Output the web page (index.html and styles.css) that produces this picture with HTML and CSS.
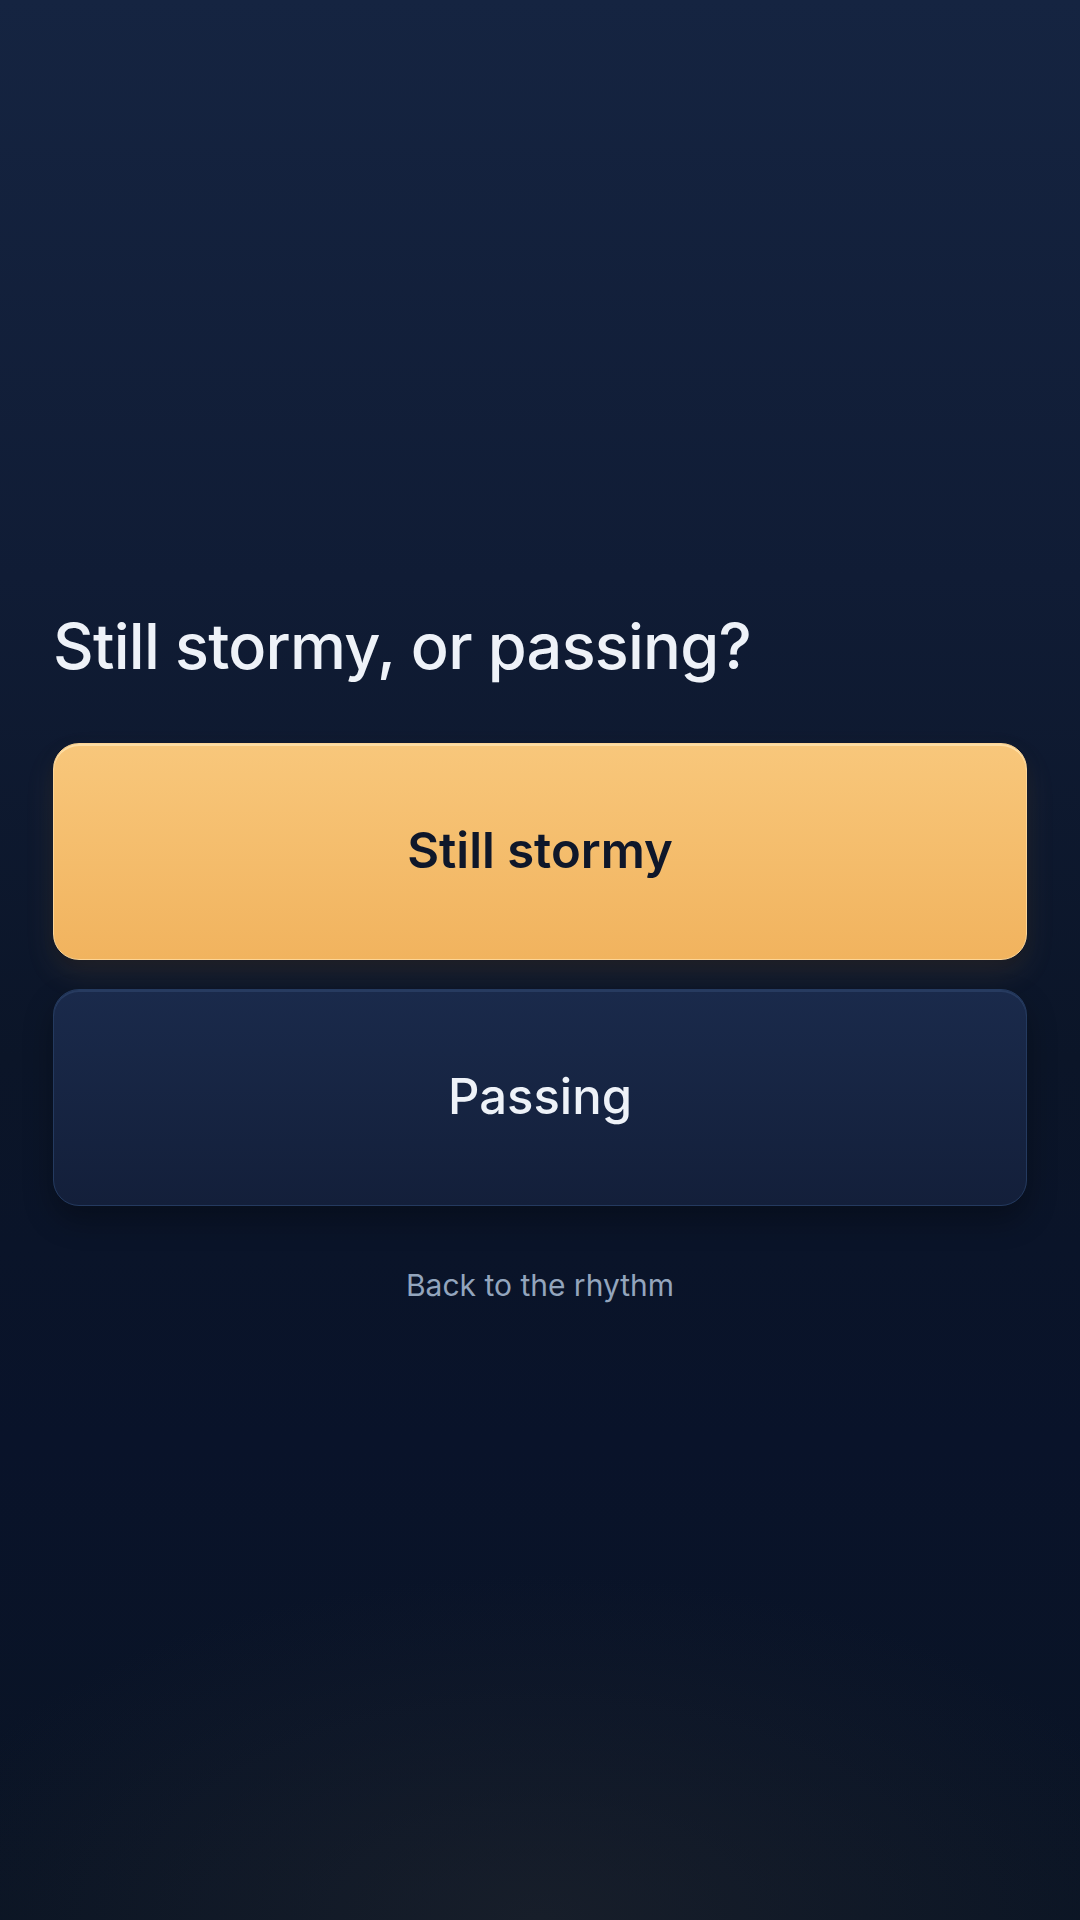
FILE: index.html
```html
<!DOCTYPE html>
<html lang="en">
<head>
<meta charset="utf-8">
<title>Still stormy, or passing?</title>
<link rel="stylesheet" href="styles.css">
</head>
<body>
<main class="screen">
  <section class="checkin">
    <h1 class="question">Still stormy, or passing?</h1>
    <div class="choices">
      <button class="choice choice-primary" type="button">Still stormy</button>
      <button class="choice choice-secondary" type="button">Passing</button>
    </div>
    <a class="back-link" href="#">Back to the rhythm</a>
  </section>
</main>
</body>
</html>
```

FILE: styles.css
```css
* {
  box-sizing: border-box;
}

html,
body {
  margin: 0;
  padding: 0;
  background: #0b1426;
}

body {
  font-family: Inter, "Noto Sans", sans-serif;
  color: #f1f5f9;
}

.screen {
  min-height: 1920px;
  display: flex;
  flex-direction: column;
  justify-content: center;
  padding: 0 53px 7px;
  background:
    radial-gradient(ellipse 60% 18% at 50% 100%, rgba(36, 40, 48, 0.5) 0%, rgba(36, 40, 48, 0) 100%),
    linear-gradient(180deg, #152441 0%, #101c35 30%, #0b1528 55%, #09132a 75%, #0a1424 100%);
}

.checkin {
  display: flex;
  flex-direction: column;
}

.question {
  margin: 0 0 59px;
  font-size: 63px;
  line-height: 76px;
  font-weight: 500;
  letter-spacing: -0.75px;
  color: #eef2f8;
}

.choices {
  display: flex;
  flex-direction: column;
  gap: 29px;
}

.choice {
  display: flex;
  align-items: center;
  justify-content: center;
  height: 217px;
  width: 100%;
  border-radius: 26px;
  font-family: Inter, "Noto Sans", sans-serif;
  font-size: 49px;
  line-height: 1.2;
  cursor: pointer;
}

.choice-primary {
  color: #0f172a;
  font-weight: 600;
  background: linear-gradient(180deg, #f8c77b 0%, #f1b35e 100%);
  border: 1.5px solid #fcd495;
  box-shadow: inset 0 2px 0 rgba(255, 228, 175, 0.8), 0 14px 30px rgba(242, 178, 94, 0.1), 0 6px 14px rgba(0, 0, 0, 0.25);
}

.choice-secondary {
  color: #eef2f8;
  font-weight: 500;
  background: linear-gradient(180deg, #1a2a4b 0%, #131f3a 100%);
  border: 1.5px solid #243a5f;
  box-shadow: inset 0 2px 0 rgba(48, 72, 110, 0.6), 0 14px 30px rgba(0, 0, 0, 0.3);
}

.back-link {
  margin-top: 59px;
  align-self: center;
  font-size: 30px;
  line-height: 40px;
  color: #93a5bd;
  text-decoration: none;
}
```
